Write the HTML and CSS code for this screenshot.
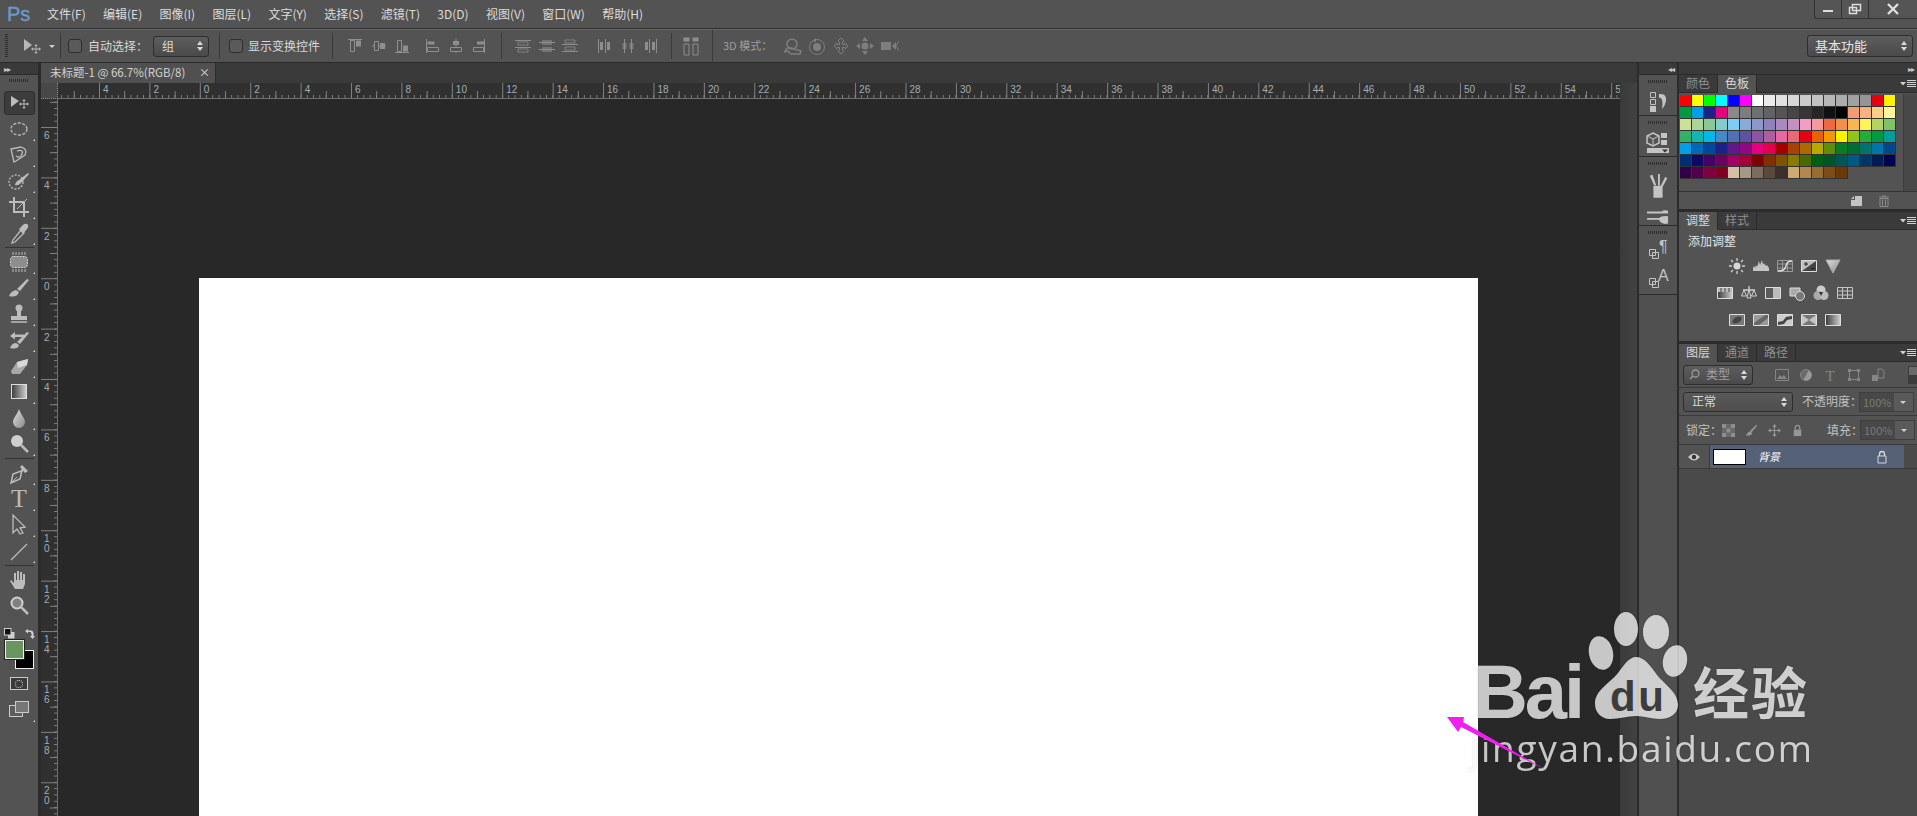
FILE: index.html
```html
<!DOCTYPE html>
<html lang="zh">
<head>
<meta charset="utf-8">
<title>Photoshop</title>
<link rel="stylesheet" href="styles.css">
</head>
<body>
<svg class="defs" aria-hidden="true">
  <defs>
    <linearGradient id="gGrad" x1="0" x2="1"><stop offset="0" stop-color="#3a3a3a"/><stop offset="1" stop-color="#d0d0d0"/></linearGradient>
    <linearGradient id="gDrop" x1="0" x2="1" y1="0" y2="1"><stop offset="0" stop-color="#e0e0e0"/><stop offset="1" stop-color="#8a8a8a"/></linearGradient>
    <symbol id="updown" viewBox="0 0 8 12"><path d="M4 1 7 5H1zM4 11 1 7H7z" fill="currentColor"/></symbol>
    <symbol id="cross" viewBox="0 0 12 12"><path d="M6 0 8 2.500H6.500V5.500H9.500V4L12 6 9.500 8V6.500H6.500V9.500H8L6 12 4 9.500H5.500V6.500H2.500V8L0 6 2.500 4V5.500H5.500V2.500H4z" fill="currentColor"/></symbol>
    <symbol id="alT" viewBox="0 0 16 16"><path d="M1 1.500H15" stroke="currentColor" fill="none"/><path d="M3.500 2.500h4v11h-4z" stroke="currentColor" fill="none"/><path d="M9 2.500h5v6H9z" fill="currentColor"/></symbol>
    <symbol id="alM" viewBox="0 0 16 16"><path d="M1 8H15" stroke="currentColor"/><path d="M3.500 3.500h4v9h-4z" stroke="currentColor" fill="#535353"/><path d="M9 5h5v6H9z" fill="currentColor"/></symbol>
    <symbol id="alB" viewBox="0 0 16 16"><path d="M1 14.500H15" stroke="currentColor" fill="none"/><path d="M3.500 2.500h4v11h-4z" stroke="currentColor" fill="none"/><path d="M9 7.500h5v6H9z" fill="currentColor"/></symbol>
    <symbol id="alL" viewBox="0 0 16 16"><path d="M2.500 1V15" stroke="currentColor"/><path d="M3.500 3.500h7v3h-7z" fill="currentColor"/><path d="M3.500 9.500h11v4h-11z" stroke="currentColor" fill="none"/></symbol>
    <symbol id="alC" viewBox="0 0 16 16"><path d="M8 1V15" stroke="currentColor"/><path d="M5 3h6v4H5z" fill="currentColor"/><path d="M2.500 9.500h11v4h-11z" stroke="currentColor" fill="#535353"/></symbol>
    <symbol id="alR" viewBox="0 0 16 16"><path d="M13.500 1V15" stroke="currentColor"/><path d="M6 3.500h7v3H6z" fill="currentColor"/><path d="M2.500 9.500h10v4h-10z" stroke="currentColor" fill="none"/></symbol>
    <symbol id="diT" viewBox="0 0 16 16"><path d="M0 2.500H16M0 9.500H16" stroke="currentColor"/><path d="M3 4h10v3H3zM3 11h10v3H3z" stroke="currentColor" fill="none" stroke-width=".8"/></symbol>
    <symbol id="diM" viewBox="0 0 16 16"><path d="M0 4.500H16M0 11.500H16" stroke="currentColor"/><path d="M3 2h10v5H3zM3 9h10v5H3z" fill="currentColor" opacity=".55"/></symbol>
    <symbol id="diB" viewBox="0 0 16 16"><path d="M0 6.500H16M0 13.500H16" stroke="currentColor"/><path d="M3 2h10v3H3zM3 9h10v3H3z" stroke="currentColor" fill="none" stroke-width=".8"/></symbol>
    <symbol id="dhL" viewBox="0 0 16 16"><path d="M2.500 1V15M9.500 1V15" stroke="currentColor"/><path d="M4 4h3v8H4z" fill="currentColor"/><path d="M11 4h3v8h-3z" fill="currentColor"/></symbol>
    <symbol id="dhC" viewBox="0 0 16 16"><path d="M4.500 1V15M11.500 1V15" stroke="currentColor"/><path d="M2.500 5h4v6h-4zM9.500 5h4v6h-4z" fill="currentColor" opacity=".6"/></symbol>
    <symbol id="dhR" viewBox="0 0 16 16"><path d="M6.500 1V15M13.500 1V15" stroke="currentColor"/><path d="M2 4h3v8H2zM9 4h3v8H9z" fill="currentColor"/></symbol>
    <symbol id="arr" viewBox="0 0 16 20"><path d="M.5 1.500h6v4h-6zM9.500 1.500h6v4h-6z" fill="currentColor"/><path d="M1 8h5v11H1zM10 8h5v11h-5z" stroke="currentColor" fill="none"/></symbol>
    <symbol id="d3a" viewBox="0 0 18 18"><circle cx="8" cy="7" r="5" fill="none" stroke="currentColor" stroke-width="1.500"/><path d="M1 15q1-5 6-4l10 3-1 3H7l-3-3z" fill="none" stroke="currentColor" stroke-width="1.500"/></symbol>
    <symbol id="d3b" viewBox="0 0 18 18"><circle cx="9" cy="10" r="7.500" fill="none" stroke="currentColor"/><circle cx="9" cy="10" r="4" fill="currentColor"/><path d="M4 4l4-3v4z" fill="currentColor"/></symbol>
    <symbol id="d3c" viewBox="0 0 18 18"><path d="M9 1l3 3-1.500 1V7.500h2.500V6l3 3-3 3v-1.500h-2.500V13L12 14l-3 3-3-3 1.500-1v-2.500H5V12L2 9l3-3v1.500h2.500V5L6 4z" fill="none" stroke="currentColor"/></symbol>
    <symbol id="d3d" viewBox="0 0 18 18"><circle cx="9" cy="9" r="3.500" fill="currentColor"/><path d="M9 0l3 4H6zM9 18l-3-4h6zM0 9l4-3v6zM18 9l-4 3V6z" fill="currentColor"/></symbol>
    <symbol id="d3e" viewBox="0 0 20 18"><path d="M1 5h10v8H1z" fill="currentColor"/><path d="M12 9l4-4v8z" fill="currentColor"/><path d="M19 4l-3 5 3 5" stroke="currentColor" fill="none"/></symbol>
    <symbol id="lock" viewBox="0 0 12 14"><path d="M3.500 6V4a2.500 2.500 0 0 1 5 0V6" fill="none" stroke="currentColor" stroke-width="1.300"/><path d="M2 6h8v7H2z" fill="none" stroke="currentColor"/></symbol>
    <symbol id="flyout" viewBox="0 0 16 10"><path d="M0 3h6L3 6.500z" fill="currentColor"/><path d="M7 1.500h9M7 3.500h9M7 5.500h9M7 7.500h9" stroke="currentColor"/></symbol>
  </defs>
</svg>

<div class="app">
  <header class="menubar">
    <span class="logo">Ps</span>
    <nav class="menu">
      <span>文件(F)</span><span>编辑(E)</span><span>图像(I)</span><span>图层(L)</span><span>文字(Y)</span><span>选择(S)</span><span>滤镜(T)</span><span>3D(D)</span><span>视图(V)</span><span>窗口(W)</span><span>帮助(H)</span>
    </nav>
    <div class="winbtns">
      <span class="winbtn min"><svg width="12" height="12" viewBox="0 0 12 12"><path d="M1 7h10v2H1z" fill="currentColor"/></svg></span>
      <span class="winbtn rest"><svg width="14" height="12" viewBox="0 0 14 12"><path d="M4.500 1.500h8v6h-8zM1.500 4.500h7v6h-7z" fill="#535353" stroke="currentColor" stroke-width="1.500"/></svg></span>
      <span class="winbtn close"><svg width="14" height="12" viewBox="0 0 14 12"><path d="M2 1l10 10M12 1 2 11" stroke="currentColor" stroke-width="2.400"/></svg></span>
    </div>
  </header>

  <div class="options">
    <span class="grip"></span>
    <svg class="opt-move" width="18" height="16" viewBox="0 0 18 16"><path d="M1 1v12l8-6z" fill="#b8b8b8"/><use href="#cross" x="8" y="6" width="10" height="10" color="#b8b8b8"/></svg>
    <span class="caret"></span>
    <span class="vsep first"></span>
    <span class="check c1"></span>
    <span class="optlabel l1">自动选择：</span>
    <span class="select s1">组<svg class="updown" width="8" height="12"><use href="#updown"/></svg></span>
    <span class="vsep second"></span>
    <span class="check c2"></span>
    <span class="optlabel l2">显示变换控件</span>
    <span class="vsep third"></span>
    <div class="icons g1"><svg><use href="#alT"/></svg><svg><use href="#alM"/></svg><svg><use href="#alB"/></svg></div>
    <div class="icons g2"><svg><use href="#alL"/></svg><svg><use href="#alC"/></svg><svg><use href="#alR"/></svg></div>
    <span class="vsep fourth"></span>
    <div class="icons g3"><svg><use href="#diT"/></svg><svg><use href="#diM"/></svg><svg><use href="#diB"/></svg></div>
    <div class="icons g4"><svg><use href="#dhL"/></svg><svg><use href="#dhC"/></svg><svg><use href="#dhR"/></svg></div>
    <span class="vsep fifth"></span>
    <svg class="arrange" width="16" height="20"><use href="#arr"/></svg>
    <span class="vsep tall"></span>
    <span class="mode3d">3D 模式：</span>
    <div class="icons3d"><svg width="18" height="18"><use href="#d3a"/></svg><svg width="18" height="18"><use href="#d3b"/></svg><svg width="18" height="18"><use href="#d3c"/></svg><svg width="18" height="18"><use href="#d3d"/></svg><svg width="20" height="18"><use href="#d3e"/></svg></div>
    <span class="select workspace">基本功能<svg class="updown" width="8" height="12"><use href="#updown"/></svg></span>
  </div>

  <div class="main">
    <aside class="toolcol">
      <div class="collapse-strip"><span class="dbl">▸▸</span></div>
      <div class="toolbar">
        <span class="hgrip"></span>
        <div class="tool active"><svg viewBox="0 0 24 24"><path d="M4 5v11l8-6z" fill="currentColor"/><use href="#cross" x="12" y="8" width="10" height="10"/></svg></div>
        <div class="tool more"><svg viewBox="0 0 24 24"><ellipse cx="12" cy="12" rx="8" ry="6" fill="none" stroke="currentColor" stroke-width="1.300" stroke-dasharray="3 1.500"/></svg></div>
        <div class="tool more"><svg viewBox="0 0 24 24"><path d="M4 6 14 4Q21 6 18 12L9 18 7 19ZM10 8Q17 6 15 11T9 13" fill="none" stroke="currentColor" stroke-width="1.300"/></svg></div>
        <div class="tool more"><svg viewBox="0 0 24 24"><circle cx="9" cy="13" r="7" fill="none" stroke="currentColor" stroke-width="1.300" stroke-dasharray="2 1.500"/><path d="M21 4l1 1-8 9q-3 3-6 2 1-4 4-5z" fill="currentColor"/></svg></div>
        <div class="tool more"><svg viewBox="0 0 24 24"><path d="M7 2v15h15M2 7h15v15" fill="none" stroke="currentColor" stroke-width="2"/><path d="M20 4 10 14" stroke="currentColor"/></svg></div>
        <div class="tool more"><svg viewBox="0 0 24 24"><path d="M14 9l3 3-9 9-3 1 1-3z" fill="none" stroke="currentColor" stroke-width="1.300"/><path d="M12 8l5-5q3-1 4 1 1 2-1 4l-4 5z" fill="currentColor"/></svg></div>
        <div class="toolsep"></div>
        <div class="tool more"><svg viewBox="0 0 24 24"><path d="M6 2v3M9 2v3M12 2v3M15 2v3M18 2v3M6 19v3M9 19v3M12 19v3M15 19v3M18 19v3" stroke="currentColor"/><rect x="3.500" y="6.500" width="17" height="11" rx="3" fill="#8e8e8e" stroke="#d8d8d8" stroke-dasharray="2 1"/></svg></div>
        <div class="tool more"><svg viewBox="0 0 24 24"><path d="M20 3l2 1-9 11-3-2z" fill="currentColor"/><path d="M9 14q-5 1-7 6 8 2 10-4z" fill="currentColor"/></svg></div>
        <div class="tool more"><svg viewBox="0 0 24 24"><circle cx="12" cy="6" r="3.500" fill="currentColor"/><path d="M10 8h4v6h-4zM4 14h16v4H4z" fill="currentColor"/><path d="M4 20h16" stroke="currentColor" stroke-width="1.500"/></svg></div>
        <div class="tool more"><svg viewBox="0 0 24 24"><path d="M20 4l2 1-9 11-3-2z" fill="currentColor"/><path d="M9 15q-4 0-6 5 8 2 9-3z" fill="currentColor"/><path d="M3 8l5-4v2.500h9V9H8v2.500z" fill="currentColor"/></svg></div>
        <div class="tool more"><svg viewBox="0 0 24 24"><path d="M4 17 10 8 21 5 20 11 13 20H5z" fill="#a8a8a8"/><path d="M10 8 21 5 20 11 11 14z" fill="#d8d8d8"/></svg></div>
        <div class="tool more"><svg viewBox="0 0 24 24"><rect x="4.500" y="4.500" width="15" height="14" fill="url(#gGrad)" stroke="#ddd"/></svg></div>
        <div class="tool more"><svg viewBox="0 0 24 24"><path d="M12 3c2 6 6 9 6 13a6 6 0 0 1-12 0c0-4 4-7 6-13z" fill="url(#gDrop)"/></svg></div>
        <div class="tool more"><svg viewBox="0 0 24 24"><circle cx="10" cy="9" r="6" fill="#cfcfcf"/><path d="M14 13l7 7" stroke="currentColor" stroke-width="2.500"/></svg></div>
        <div class="toolsep"></div>
        <div class="tool more"><svg viewBox="0 0 24 24"><path d="M17 9 6 13 4 22 13 18 15 9z" fill="none" stroke="currentColor" stroke-width="1.500"/><path d="M4 22l6-6" stroke="currentColor"/><path d="M15 4l6 6-3 2-5-6z" fill="currentColor"/></svg></div>
        <div class="tool more"><svg viewBox="0 0 24 24"><text class="tee" x="12" y="20" text-anchor="middle">T</text></svg></div>
        <div class="tool more"><svg viewBox="0 0 24 24"><path d="M6 2v18l4-4 3 5 3-1-3-5 5-1z" fill="none" stroke="currentColor" stroke-width="1.300"/></svg></div>
        <div class="tool more"><svg viewBox="0 0 24 24"><path d="M4 21 20 5" stroke="currentColor" stroke-width="1.300"/></svg></div>
        <div class="toolsep"></div>
        <div class="tool"><svg viewBox="0 0 24 24"><path d="M8 21 3 13l1-1 3 3V5h2v7h1V3h2v9h1V4h2v8h1V6h2v10l-2 5z" fill="currentColor"/></svg></div>
        <div class="tool"><svg viewBox="0 0 24 24"><circle cx="10" cy="9" r="5.500" fill="#808080" stroke="#d0d0d0" stroke-width="2"/><path d="M14 13l7 7" stroke="currentColor" stroke-width="2.500"/></svg></div>
        <div class="swap-row">
          <svg width="11" height="11" viewBox="0 0 11 11"><rect x="4" y="4" width="6.500" height="6.500" fill="#d0d0d0"/><rect x=".5" y=".5" width="6.500" height="6.500" fill="#111" stroke="#d0d0d0"/></svg>
          <svg width="11" height="11" viewBox="0 0 11 11"><path d="M1 3 4 1v1.500h3Q9.500 2.500 9.500 6V8H11L8.500 11 6 8H7.500V6Q7.500 4 6 4H4V5.500z" fill="#d0d0d0"/></svg>
        </div>
        <div class="colors"><span class="bgcol"></span><span class="fgcol"></span></div>
        <div class="quickmask"><span></span></div>
        <div class="tool more screen"><svg viewBox="0 0 24 24"><rect x="2.500" y="7.500" width="13" height="11" fill="#5c5c5c" stroke="#ccc"/><rect x="8.500" y="3.500" width="13" height="11" fill="#777" stroke="#ccc"/></svg></div>
      </div>
    </aside>

    <section class="doc">
      <div class="tabrow"><div class="doctab"><span>未标题-1 @ 66.7%(RGB/8)</span><span class="tabx">×</span></div></div>
      <div class="docbody">
        <div class="corner"></div>
        <div class="hruler"><span>4</span><span>2</span><span>0</span><span>2</span><span>4</span><span>6</span><span>8</span><span>10</span><span>12</span><span>14</span><span>16</span><span>18</span><span>20</span><span>22</span><span>24</span><span>26</span><span>28</span><span>30</span><span>32</span><span>34</span><span>36</span><span>38</span><span>40</span><span>42</span><span>44</span><span>46</span><span>48</span><span>50</span><span>52</span><span>54</span><span>56</span></div>
        <div class="vscroll"></div>
        <div class="vruler"><span>6</span><span>4</span><span>2</span><span>0</span><span>2</span><span>4</span><span>6</span><span>8</span><span>10</span><span>12</span><span>14</span><span>16</span><span>18</span><span>20</span></div>
        <div class="canvasarea"><div class="page"></div></div>
      </div>
    </section>

    <aside class="dock">
      <div class="dockstrip"><span class="dbl">◂◂</span></div>
      <div class="dockgroup h40"><span class="hgrip"></span>
        <svg width="24" height="26" viewBox="0 0 24 26"><path d="M4.500 3.500h5v5h-5zM4.500 10.500h5v5h-5z" fill="none" stroke="#c4c4c4"/><path d="M4 17h6v6H4z" fill="#c4c4c4"/><path d="M13 5q8-1 7 7-1 5-4 8 1-6 0-9-1-3-3-2z" fill="#c4c4c4"/></svg>
      </div>
      <div class="dockgroup h40"><span class="hgrip"></span>
        <svg width="26" height="26" viewBox="0 0 26 26"><path d="M8 3l6 3v7l-6 3-6-3V6z" fill="none" stroke="#c4c4c4" stroke-width="1.500"/><path d="M2 6l6 3 6-3M8 9v7" stroke="#c4c4c4" fill="none"/><path d="M16 3h6v5h-6zM16 10h6v5h-6zM2 18h22v5H2z" fill="#c4c4c4"/><path d="M17 19.500h6l-3 3z" fill="#333"/></svg>
      </div>
      <div class="dockgroup h68"><span class="hgrip"></span>
        <svg width="26" height="28" viewBox="0 0 26 28"><path d="M8 14h10v13H8z" fill="#c4c4c4"/><path d="M9 14 4 3l3-1 4 11zM13 14V1h2v13zM16 14l5-10 2 2-5 9z" fill="#c4c4c4"/></svg>
        <svg width="26" height="20" viewBox="0 0 26 20"><path d="M1 5h16Q19 3 24 4V7L17 7H1z" fill="#c4c4c4"/><path d="M24 10v8q-7 2-10-4H1v-2h13q3-3 10-2z" fill="#c4c4c4"/></svg>
      </div>
      <div class="dockgroup h68 glyphs"><span class="hgrip"></span>
        <svg width="26" height="26" viewBox="0 0 26 26"><text class="dockglyph" x="14" y="15">¶</text><path d="M4.500 12.500h6v6h-6zM7.500 15.500h6v6h-6z" fill="#535353" stroke="#c4c4c4"/></svg>
        <svg width="26" height="26" viewBox="0 0 26 26"><text class="dockglyph" x="13" y="15">A</text><path d="M4.500 12.500h6v6h-6zM7.500 15.500h6v6h-6z" fill="#535353" stroke="#c4c4c4"/></svg>
      </div>
      <div class="dockrest"></div>
    </aside>

    <aside class="panels">
      <div class="dockstrip right"><span class="dbl">▸▸</span></div>
      <section class="panel swatchpanel">
        <div class="tabs"><span class="tab">颜色</span><span class="tab on">色板</span><svg class="fly" width="16" height="10"><use href="#flyout"/></svg></div>
        <div class="swatchbody">
          <div class="swatches">
            <i style="background:#ff0000"></i><i style="background:#ffff00"></i><i style="background:#00ff00"></i><i style="background:#00ffff"></i><i style="background:#0000ff"></i><i style="background:#ff00ff"></i><i style="background:#ffffff"></i><i style="background:#ebebeb"></i><i style="background:#e1e1e1"></i><i style="background:#d7d7d7"></i><i style="background:#cccccc"></i><i style="background:#c2c2c2"></i><i style="background:#b7b7b7"></i><i style="background:#acacac"></i><i style="background:#a1a1a1"></i><i style="background:#959595"></i><i style="background:#e60012"></i><i style="background:#fff100"></i>
            <i style="background:#009944"></i><i style="background:#00a0e9"></i><i style="background:#1d2088"></i><i style="background:#e4007f"></i><i style="background:#898989"></i><i style="background:#7d7d7d"></i><i style="background:#707070"></i><i style="background:#626262"></i><i style="background:#555555"></i><i style="background:#464646"></i><i style="background:#363636"></i><i style="background:#262626"></i><i style="background:#111111"></i><i style="background:#000000"></i><i style="background:#f29b76"></i><i style="background:#f6b37f"></i><i style="background:#facd89"></i><i style="background:#fff799"></i>
            <i style="background:#cce198"></i><i style="background:#acd598"></i><i style="background:#89c997"></i><i style="background:#84ccc9"></i><i style="background:#7ecef4"></i><i style="background:#88abda"></i><i style="background:#8c97cb"></i><i style="background:#8f82bc"></i><i style="background:#aa89bd"></i><i style="background:#c490bf"></i><i style="background:#f19ec2"></i><i style="background:#f29a9e"></i><i style="background:#ec6941"></i><i style="background:#f19149"></i><i style="background:#f8b551"></i><i style="background:#fff45c"></i><i style="background:#b3d465"></i><i style="background:#80c269"></i>
            <i style="background:#32b16c"></i><i style="background:#13b5b1"></i><i style="background:#00b7ee"></i><i style="background:#448aca"></i><i style="background:#556fb5"></i><i style="background:#5f52a0"></i><i style="background:#8957a1"></i><i style="background:#ae5da1"></i><i style="background:#ea68a2"></i><i style="background:#eb6877"></i><i style="background:#e60012"></i><i style="background:#eb6100"></i><i style="background:#f39800"></i><i style="background:#fff100"></i><i style="background:#8fc31f"></i><i style="background:#22ac38"></i><i style="background:#009944"></i><i style="background:#009e96"></i>
            <i style="background:#00a0e9"></i><i style="background:#0068b7"></i><i style="background:#00479d"></i><i style="background:#1d2088"></i><i style="background:#601986"></i><i style="background:#920783"></i><i style="background:#e4007f"></i><i style="background:#e5004f"></i><i style="background:#a40000"></i><i style="background:#a84200"></i><i style="background:#ac6a00"></i><i style="background:#b7aa00"></i><i style="background:#638c0b"></i><i style="background:#097c25"></i><i style="background:#006e32"></i><i style="background:#00736d"></i><i style="background:#0075a9"></i><i style="background:#004986"></i>
            <i style="background:#002e73"></i><i style="background:#100964"></i><i style="background:#440062"></i><i style="background:#6a005f"></i><i style="background:#a40062"></i><i style="background:#a40035"></i><i style="background:#7f0000"></i><i style="background:#7e3000"></i><i style="background:#805100"></i><i style="background:#857c00"></i><i style="background:#486a00"></i><i style="background:#005e15"></i><i style="background:#005326"></i><i style="background:#005652"></i><i style="background:#005982"></i><i style="background:#003567"></i><i style="background:#001c58"></i><i style="background:#000050"></i>
            <i style="background:#32004a"></i><i style="background:#4f0049"></i><i style="background:#7e0040"></i><i style="background:#7f0023"></i><i style="background:#d3c0a5"></i><i style="background:#a59887"></i><i style="background:#7c6c5b"></i><i style="background:#5a4a3e"></i><i style="background:#3c2f2c"></i><i style="background:#cfa972"></i><i style="background:#b28850"></i><i style="background:#996c33"></i><i style="background:#7e4c1a"></i><i style="background:#6a3906"></i>
          </div>
          <div class="swatchscroll"></div>
        </div>
        <div class="panelfoot">
          <svg width="12" height="12" viewBox="0 0 12 12"><path d="M5 1h7v10H1V5h4z" fill="#c4c4c4"/><path d="M1 4l3-3v3z" fill="#c4c4c4"/></svg>
          <svg class="trash" width="12" height="12" viewBox="0 0 12 12"><path d="M1 2h10M4 1h4M2 3.500h8V11.500H2zM4.500 4.500v6M7.500 4.500v6" stroke="#8a8a8a" fill="none"/></svg>
        </div>
      </section>

      <section class="panel adjustpanel">
        <div class="tabs"><span class="tab on">调整</span><span class="tab">样式</span><svg class="fly" width="16" height="10"><use href="#flyout"/></svg></div>
        <p class="addadj">添加调整</p>
        <div class="adjrow">
          <svg viewBox="0 0 16 16"><circle cx="8" cy="8" r="3.500" fill="#d8d8d8"/><path d="M8 0v3M8 13v3M0 8h3M13 8h3M2 2l2 2M12 12l2 2M14 2l-2 2M4 12l-2 2" stroke="#d0d0d0" stroke-width="1.300"/></svg>
          <svg viewBox="0 0 16 16"><path d="M0 13V10l1-2 1 2 1-3 1 2 2-6 1 4 2-5 1 5 1-2 2 3 1-1 2 3v3z" fill="#c4c4c4"/></svg>
          <svg viewBox="0 0 16 16"><path d="M.5 2.500h15v11H.5zM5.500 2.500v11M10.500 2.500v11M.5 6h15M.5 10h15" stroke="#999" fill="none"/><path d="M1 13Q8 13 9 8T15 3" stroke="#e0e0e0" fill="none" stroke-width="1.300"/></svg>
          <svg viewBox="0 0 16 16"><path d="M.5 2.500h15v11H.5z" fill="#bdbdbd" stroke="#ddd"/><path d="M1 13 15 3v10z" fill="#444"/><path d="M3 6h4M5 4v4M10 10.500h4" stroke="#222"/></svg>
          <svg viewBox="0 0 16 16"><path d="M1 2h14L8 15z" fill="url(#gDrop)" stroke="#aaa"/></svg>
        </div>
        <div class="adjrow">
          <svg viewBox="0 0 16 16"><path d="M.5 2.500h15v11H.5z" fill="url(#gGrad)" stroke="#ddd"/><path d="M1 3h14v4H1z" fill="#bbb"/><path d="M4 3v4M8 3v4M12 3v4" stroke="#444"/></svg>
          <svg viewBox="0 0 16 16"><path d="M8 1v3M2 5h12" stroke="#d0d0d0" stroke-width="1.300"/><path d="M3 5 .5 11h5zM13 5l-2.500 6h5zM8 4 6 13h4z" fill="none" stroke="#d0d0d0"/></svg>
          <svg viewBox="0 0 16 16"><path d="M.5 2.500h15v11H.5z" fill="#5a5a5a" stroke="#ddd"/><path d="M8 3h7v10H8z" fill="#bbb"/></svg>
          <svg viewBox="0 0 16 16"><path d="M1 3h10v8H1z" fill="#aaa" stroke="#ddd"/><circle cx="11" cy="11" r="4.500" fill="#777" stroke="#ddd"/></svg>
          <svg viewBox="0 0 16 16"><circle cx="8" cy="5" r="4.500" fill="#ccc"/><circle cx="5" cy="10.500" r="4.500" fill="#aaa"/><circle cx="11" cy="10.500" r="4.500" fill="#bbb"/><path d="M6 7h4L8 11z" fill="#333"/></svg>
          <svg viewBox="0 0 16 16"><path d="M.5 2.500h15v11H.5zM5.500 2.500v11M10.500 2.500v11M.5 6h15M.5 10h15" stroke="#c4c4c4" fill="none"/></svg>
        </div>
        <div class="adjrow">
          <svg viewBox="0 0 16 16"><path d="M.5 2.500h15v11H.5z" fill="#777" stroke="#ddd"/><ellipse cx="8" cy="8" rx="5" ry="3" fill="#444" transform="rotate(-30 8 8)"/></svg>
          <svg viewBox="0 0 16 16"><path d="M.5 2.500h15v11H.5z" fill="#999" stroke="#ddd"/><path d="M1 11 12 3h3v3L6 13H1z" fill="#666"/></svg>
          <svg viewBox="0 0 16 16"><path d="M.5 2.500h15v11H.5z" fill="#ccc" stroke="#ddd"/><path d="M1 10l5-1 3-4 6-1v3l-5 1-3 4-6 1z" fill="#444"/></svg>
          <svg viewBox="0 0 16 16"><path d="M.5 2.500h15v11H.5z" fill="#777" stroke="#ddd"/><path d="M1 3l7 5-7 5zM15 3 8 8l7 5z" fill="#c4c4c4"/></svg>
          <svg viewBox="0 0 16 16"><path d="M.5 2.500h15v11H.5z" fill="url(#gGrad)" stroke="#ddd"/></svg>
        </div>
      </section>

      <section class="panel layerpanel">
        <div class="tabs"><span class="tab on">图层</span><span class="tab">通道</span><span class="tab">路径</span><svg class="fly" width="16" height="10"><use href="#flyout"/></svg></div>
        <div class="lrow filter">
          <span class="select kind"><svg width="11" height="11" viewBox="0 0 11 11"><circle cx="6.500" cy="4.500" r="3.500" fill="none" stroke="#999" stroke-width="1.300"/><path d="M4 7 1 10" stroke="#999" stroke-width="1.500"/></svg>类型<svg class="updown" width="8" height="12"><use href="#updown"/></svg></span>
          <div class="filtericons">
            <svg viewBox="0 0 14 14"><path d="M.5 1.500h13v11H.5z" fill="none" stroke="#858585"/><path d="M2 11l3-4 2 2 2-2 3 4z" fill="#858585"/></svg>
            <svg viewBox="0 0 14 14"><circle cx="7" cy="7" r="5.500" fill="#6a6a6a" stroke="#858585"/><path d="M7 1.500a5.500 5.500 0 0 1 0 11z" transform="rotate(30 7 7)" fill="#999"/></svg>
            <svg viewBox="0 0 14 14"><text class="filtT" x="7" y="13" text-anchor="middle">T</text></svg>
            <svg viewBox="0 0 14 14"><path d="M2.500 2.500h9v9h-9z" fill="none" stroke="#858585"/><path d="M1 1h3v3H1zM10 1h3v3h-3zM1 10h3v3H1zM10 10h3v3h-3z" fill="#858585"/></svg>
            <svg viewBox="0 0 14 14"><path d="M7 1h4l2 2v7H7z" fill="none" stroke="#858585"/><path d="M1 7h6v6H1z" fill="#858585"/></svg>
          </div>
          <span class="toggle"></span>
        </div>
        <div class="lrow blend">
          <span class="select mode">正常<svg class="updown" width="8" height="12"><use href="#updown"/></svg></span>
          <span class="lbl">不透明度：</span>
          <span class="numbox">100%<b></b></span>
        </div>
        <div class="lrow lockrow">
          <span class="lbl lockl">锁定：</span>
          <div class="lockicons">
            <svg viewBox="0 0 12 12"><path d="M0 0h4v4H0zM8 0h4v4H8zM4 4h4v4H4zM0 8h4v4H0zM8 8h4v4H8z" fill="#8f8f8f"/><path d="M4 0h4v4H4zM0 4h4v4H0zM8 4h4v4H8zM4 8h4v4H4z" fill="#6a6a6a"/></svg>
            <svg viewBox="0 0 16 16"><path d="M14 1l1 1-7 8-2-1.500z" fill="#969696"/><path d="M6 9q-3 1-5 5 7 1 8-3z" fill="#969696"/></svg>
            <svg viewBox="0 0 12 12"><use href="#cross" color="#969696" width="12" height="12"/></svg>
            <svg viewBox="0 0 12 14"><path d="M3.500 6V4a2.500 2.500 0 0 1 5 0V6" fill="none" stroke="#969696" stroke-width="1.300"/><path d="M2 6h8v7H2z" fill="#969696"/></svg>
          </div>
          <span class="lbl filll">填充：</span>
          <span class="numbox">100%<b></b></span>
        </div>
        <div class="layer">
          <span class="eye"><svg width="14" height="10" viewBox="0 0 14 10"><path d="M1 5q6-7 12 0-6 7-12 0z" fill="#c8c8c8"/><circle cx="7" cy="5" r="2.200" fill="#333"/></svg></span>
          <div class="layerrow">
            <span class="thumb"></span>
            <em>背景</em>
            <svg class="lrowlock" width="12" height="14"><use href="#lock"/></svg>
          </div>
        </div>
        <div class="layerlist"></div>
      </section>
    </aside>
  </div>

  <svg class="watermark" viewBox="0 0 1917 816" aria-hidden="true">
    <g class="wm-fill">
      <ellipse cx="1626" cy="629" rx="12" ry="17"/>
      <ellipse cx="1656" cy="632" rx="13" ry="17"/>
      <ellipse cx="1601" cy="653" rx="12" ry="17" transform="rotate(-12 1601 653)"/>
      <ellipse cx="1675" cy="661" rx="12" ry="16" transform="rotate(12 1675 661)"/>
      <path d="M1636 657c8 0 14 8 21 18 8 10 21 17 21 30 0 10-10 14-18 14-9 0-15-3-24-3s-16 3-26 3c-9 0-15-7-15-15 0-14 14-20 23-31 6-8 11-16 18-16z"/>
      <text class="wm-bai" x="1473" y="718" textLength="112">Bai</text>
      <text class="wm-jy" x="1693" y="714" textLength="114">经验</text>
      <text class="wm-url" x="1470" y="762" textLength="342">jingyan.baidu.com</text>
    </g>
    <text class="wm-du" x="1610" y="711" textLength="54">du</text>
  </svg>
  <svg class="pointer" viewBox="0 0 1917 816" aria-hidden="true"><path d="M1447 717H1464L1463 722 1546 770 1461 727 1458 732z"/></svg>
</div>
</body>
</html>
```

FILE: styles.css
```css
*{box-sizing:border-box}
html,body{margin:0;height:100%;overflow:hidden;background:#282828}
body{font:12px/1.2 "Noto Sans CJK SC","Liberation Sans",sans-serif;color:#d8d8d8}
.defs{display:block;width:0;height:0}
.app{position:relative;width:1917px;height:816px;display:flex;flex-direction:column;overflow:hidden;background:#535353}

/* menu */
.menubar{height:29px;flex:none;display:flex;align-items:center;background:#535353;border-bottom:1px solid #2e2e2e;padding-left:7px}
.logo{font:400 20px/28px "Liberation Sans",sans-serif;color:#6d9ac8;width:24px;-webkit-text-stroke:.4px #6d9ac8}
.menu{display:flex;gap:17.300px;margin-left:16px;color:#dcdcdc}
.menu span{white-space:nowrap}
.winbtns{margin-left:auto;align-self:flex-start;display:flex;height:19px;border:1px solid #333;border-top:0;border-right:0;border-radius:0 0 0 3px;background:#555}
.winbtn{display:flex;align-items:center;justify-content:center;color:#dedede;border-right:1px solid #333;height:18px}
.min{width:27px}.rest{width:27px}.close{width:48px;border-right:0}

/* options bar */
.options{height:34px;flex:none;display:flex;align-items:center;background:#535353;border-bottom:1px solid #2b2b2b;border-top:1px solid #666;padding-left:5px;color:#d8d8d8}
.grip{width:3px;height:24px;background:repeating-linear-gradient(#2e2e2e 0 1px,transparent 1px 2px)}
.opt-move{margin-left:15px}
.caret{margin-left:8px;width:0;height:0;border:3px solid transparent;border-top:3px solid #d0d0d0;margin-top:3px}
.vsep{width:1px;height:26px;background:#3a3a3a;flex:none}
.first{margin-left:5px}
.check{width:14px;height:14px;background:#5a5a5a;border:1px solid #2e2e2e;border-radius:3px;flex:none}
.c1{margin-left:7px}
.l1{margin-left:6px;width:60px;white-space:nowrap}
.select{display:flex;align-items:center;height:21px;background:linear-gradient(#5d5d5d,#4a4a4a);border:1px solid #2e2e2e;border-radius:3px;color:#d8d8d8;position:relative;flex:none;padding-left:8px}
.updown{position:absolute;right:4px;top:50%;margin-top:-6px;color:#d8d8d8}
.s1{margin-left:5px;width:56px}
.second{margin-left:10px}
.c2{margin-left:9px}
.l2{margin-left:5px;width:72px;white-space:nowrap}
.third{margin-left:12px}
.icons{display:flex;gap:7.500px;color:#8e8e8e;flex:none}
.icons svg{width:16px;height:16px}
.g1{margin-left:14px}.g2{margin-left:14px}
.fourth{margin-left:14px}
.g3{margin-left:13px}.g4{margin-left:18px}
.fifth{margin-left:12px}
.arrange{margin-left:11px;color:#8e8e8e}
.tall{margin-left:13px;height:33px}
.mode3d{margin-left:10px;color:#9c9c9c;font-size:11px;width:50px;white-space:nowrap}
.icons3d{margin-left:11px;display:flex;gap:6px;color:#7e7e7e}
.workspace{margin-left:auto;margin-right:4px;width:106px;height:22px;padding-left:7px;color:#e4e4e4;font-size:13px}

/* main */
.main{flex:1;display:flex;min-height:0;background:#2b2b2b}
.toolcol{width:38px;flex:none;display:flex;flex-direction:column;margin-right:3px}
.collapse-strip{height:11px;background:#3a3a3a;display:flex;align-items:center;padding-left:4px;flex:none;margin-bottom:1px}
.dockstrip{height:11px;background:#3a3a3a;display:flex;align-items:center;justify-content:flex-end;padding-right:3px;flex:none;margin-bottom:1px}
.dbl{font-size:8px;line-height:10px;color:#c8c8c8;letter-spacing:-1px}
.toolbar{flex:1;background:#535353;display:flex;flex-direction:column;align-items:center;padding-top:4px}
.hgrip{display:block;width:20px;height:3px;flex:none;margin:0 auto;background:repeating-linear-gradient(90deg,#2e2e2e 0 1px,transparent 1px 2px)}
.toolbar .hgrip{margin-bottom:9px}
.tool{position:relative;width:31px;height:26px;flex:none;display:flex;align-items:center;justify-content:center;color:#bcbcbc}
.tool svg{width:24px;height:24px;display:block}
.tool.active{height:24px;margin-bottom:1px;background:#3c3c3c;border:1px solid #2e2e2e;border-radius:3px}
.tool.more::after{content:"";position:absolute;right:0;bottom:1px;border:1.500px solid transparent;border-right-color:#ddd;border-bottom-color:#ddd}
.tee{font:400 26px "Liberation Serif",serif;fill:#bcbcbc}
.toolsep{width:29px;height:1px;background:#333;margin:1px 0;flex:none;box-sizing:content-box;border-bottom:0}
.swap-row{width:31px;height:11px;margin-top:9px;display:flex;justify-content:space-between;padding:0;flex:none}
.colors{position:relative;width:29px;height:29px;margin-top:1px;flex:none}
.fgcol,.bgcol{position:absolute;width:19px;height:19px;border:1px solid #eee}
.fgcol{left:0;top:0;background:#6a9460;outline:1px solid #222}
.bgcol{right:0;bottom:0;background:#000}
.quickmask{width:18px;height:13px;margin-top:8px;border:1px solid #c8c8c8;background:#3a3a3a;display:flex;align-items:center;justify-content:center;flex:none}
.quickmask span{width:8px;height:8px;border:1px dotted #ddd;border-radius:50%}
.screen{margin-top:7px}

.doc{flex:1;display:flex;flex-direction:column;min-width:0;margin-right:2px}
.tabrow{height:20px;flex:none;background:#3a3a3a;display:flex}
.doctab{width:175px;display:flex;align-items:center;justify-content:space-between;background:#505050;padding:0 5px 0 9px;font-size:11.500px;color:#d0d0d0;white-space:nowrap;border-right:1px solid #2b2b2b}
.tabx{font-size:11px;color:#e0e0e0}
.docbody{flex:1;display:grid;grid-template-columns:17px 1fr 17px;grid-template-rows:16px 1fr;min-height:0}
.corner{background:#484848;border-right:1px dotted #888;border-bottom:1px dotted #888}
.hruler{background-color:#303030;border-bottom:1px solid #6f6f6f;display:flex;padding-left:41px;overflow:hidden;font:10px/13px "Liberation Sans",sans-serif;color:#a4acb4;
  background-image:linear-gradient(90deg,#808080 1px,transparent 1px),linear-gradient(90deg,#808080 1px,transparent 1px),linear-gradient(90deg,#808080 1px,transparent 1px);
  background-size:50.420px 100%,50.420px 7px,6.303px 3px;
  background-position:41px 0,66.210px 100%,41px 100%;
  background-repeat:repeat-x}
.hruler span{flex:0 0 50.420px;padding-left:4px}
.vscroll{grid-row:1 / 3;grid-column:3;background:linear-gradient(90deg,#3a3a3a,#424242)}
.vruler{background-color:#303030;border-right:1px solid #6f6f6f;overflow:hidden;padding-top:28px;font:10px/10px "Liberation Sans",sans-serif;color:#a4acb4;
  background-image:linear-gradient(#808080 1px,transparent 1px),linear-gradient(#808080 1px,transparent 1px),linear-gradient(#808080 1px,transparent 1px);
  background-size:100% 50.420px,7px 50.420px,3px 6.303px;
  background-position:0 28px,100% 53.210px,100% 28px;
  background-repeat:repeat-y}
.vruler span{display:block;height:50.420px;width:11px;padding:4px 0 0 3px;word-break:break-all}
.canvasarea{background:#282828;padding:179px 0 0 141px;overflow:hidden;min-height:0}
.page{width:1279px;height:600px;background:#fff}

.dock{width:38px;flex:none;display:flex;flex-direction:column;margin-right:2px;background:#2b2b2b}
.dockgroup{background:#535353;display:flex;flex-direction:column;align-items:center;padding-top:5px;margin-bottom:1px;flex:none;gap:9px}
.h40{height:40px;gap:6px}
.h68{height:68px;gap:8px}
.glyphs{gap:3px}
.dockrest{flex:1;background:#505050}
.dockglyph{font:400 16px "Liberation Sans",sans-serif;fill:#c4c4c4}

.panels{width:238px;flex:none;display:flex;flex-direction:column}
.panel{background:#535353;display:flex;flex-direction:column;flex:none;margin-bottom:3px}
.tabs{height:18px;background:#3a3a3a;display:flex;position:relative;flex:none;border-bottom:1px solid #2b2b2b}
.tab{width:39px;text-align:center;color:#8f8f8f;font-size:12px;line-height:15px;border-right:1px solid #2b2b2b;flex:none}
.tab.on{background:#535353;color:#d8d8d8;height:18px}
.fly{position:absolute;right:1px;top:4px;color:#d0d0d0}
.swatchpanel{height:134px}
.swatchbody{flex:1;display:flex;justify-content:space-between;background:#535353;padding-top:1px}
.swatches{width:217px;display:flex;flex-wrap:wrap;align-content:flex-start;padding-top:1px;padding-left:1px}
.swatches i{display:block;width:12px;height:12px;border-right:1px solid #333;border-bottom:1px solid #333}
.swatchscroll{width:14px;background:#484848;border-left:1px solid #3c3c3c}
.panelfoot{height:18px;flex:none;display:flex;justify-content:flex-end;align-items:center;gap:16px;padding-right:27px;border-top:1px solid #333;background:#535353}
.adjustpanel{height:129px}
.addadj{margin:4px 0 10px 9px;color:#e4e4e4;font-size:12px;line-height:14px}
.adjrow{display:flex;justify-content:center;gap:8px;width:211px;height:27px;align-items:flex-start;flex:none}
.adjrow svg{width:16px;height:16px;flex:none}
.layerpanel{flex:1;margin-bottom:0;background:#4a4a4a}
.lrow{flex:none;display:flex;align-items:center;background:#535353;padding-left:4px;border-bottom:1px solid #3a3a3a;position:relative}
.filter{height:26px}
.kind{width:70px;height:20px;gap:6px;padding-left:5px;color:#a0a0a0}
.filtericons{display:flex;gap:10px;margin-left:22px}
.filtericons svg{width:14px;height:14px}
.filtT{font:400 15px "Liberation Serif",serif;fill:#858585}
.toggle{margin-left:auto;margin-right:0;width:9px;height:18px;background:linear-gradient(#6a6a6a 50%,#3c3c3c 50%);border:1px solid #3c3c3c;border-right:0}
.blend{height:28px}
.mode{width:110px;height:20px;padding-left:8px;background:linear-gradient(#5a5a5a,#4e4e4e)}
.lbl{color:#c0c0c0;white-space:nowrap}
.blend .lbl{margin-left:9px;width:57px}
.numbox{position:relative;width:55px;height:20px;background:#484848;border:1px solid #3e3e3e;color:#7a7a7a;font-size:11px;line-height:18px;padding-left:3px;flex:none}
.numbox b{position:absolute;right:0;top:0;bottom:0;width:19px;background:#5a5a5a}
.numbox b::after{content:"";position:absolute;left:6px;top:8px;border:3px solid transparent;border-top-color:#d0d0d0}
.lockrow{height:29px}
.lockl{margin-left:3px;width:36px}
.lockicons{display:flex;align-items:center;gap:10px;width:87px;flex:none}
.lockicons svg{width:13px;height:13px;flex:none}
.filll{margin-left:18px;width:33px}
.layer{height:24px;flex:none;display:flex;background:#4a4a4a;border-bottom:1px solid #3a3a3a}
.eye{width:31px;display:flex;align-items:center;justify-content:center;background:#535353;border-right:1px solid #3a3a3a;flex:none}
.layerrow{width:194px;display:flex;align-items:center;background:#556177;padding-left:3px;position:relative}
.thumb{width:33px;height:16px;background:#fff;border:1px solid #000}
.layerrow em{margin-left:12px;color:#fff;font-size:11px}
.lrowlock{position:absolute;right:16px;top:5px;color:#d8d8d8}
.layerlist{flex:1}

/* overlays */
.watermark,.pointer{position:absolute;left:0;top:0;width:1917px;height:816px;pointer-events:none}
.wm-fill{fill:rgba(255,255,255,.745);filter:drop-shadow(0 0 1px rgba(0,0,0,.18))}
.wm-bai{font:700 76px "Liberation Sans",sans-serif}
.wm-jy{font:700 56px "Noto Sans CJK SC",sans-serif}
.wm-url{font:400 37px "Open Sans",sans-serif}
.wm-du{font:700 42px "Liberation Sans",sans-serif;fill:#3c3c3c}
.pointer path{fill:#f01ff0}
```
